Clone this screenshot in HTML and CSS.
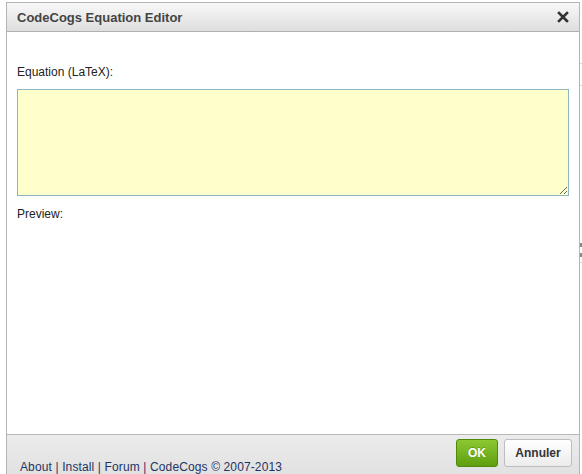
FILE: index.html
```html
<!DOCTYPE html>
<html>
<head>
<meta charset="utf-8">
<link rel="stylesheet" href="styles.css">
</head>
<body>
<div class="page-edge">
  <span class="edge-line l1"></span>
  <span class="edge-line l2"></span>
  <span class="edge-line l3"></span>
  <span class="edge-mark m1"></span>
  <span class="edge-mark m2"></span>
</div>
<div class="dialog">
  <div class="titlebar">
    <span class="title">CodeCogs Equation Editor</span>
    <span class="close">
      <svg width="12" height="12" viewBox="0 0 12 12"><path d="M2 2 L10 10 M10 2 L2 10" stroke="#333" stroke-width="2.6" stroke-linecap="square"/></svg>
    </span>
  </div>
  <div class="content">
    <label class="label">Equation (LaTeX):</label>
    <textarea class="latex"></textarea>
    <div class="label preview">Preview:</div>
  </div>
  <div class="footer">
    <div class="links">
      <a>About</a> <span class="sep">|</span> <a>Install</a> <span class="sep">|</span> <a>Forum</a> <span class="sep">|</span> <a>CodeCogs &copy; 2007-2013</a>
    </div>
    <div class="buttons">
      <button class="btn ok">OK</button>
      <button class="btn cancel">Annuler</button>
    </div>
  </div>
</div>
</body>
</html>
```
FILE: styles.css
```css
html, body {
  margin: 0;
  padding: 0;
  background: #fff;
  overflow: hidden;
  font-family: "Liberation Sans", Arial, sans-serif;
}
body {
  width: 582px;
  height: 474px;
  position: relative;
}
.page-edge {
  position: absolute;
  left: 580px;
  top: 0;
  width: 2px;
  height: 474px;
}
.edge-line {
  position: absolute;
  left: 0;
  width: 2px;
  height: 1px;
  background: #d8d8d8;
}
.l1 { top: 63px; }
.l2 { top: 85px; }
.l3 { top: 262px; }
.edge-mark {
  position: absolute;
  left: 0;
  width: 2px;
  height: 4px;
  background: #888;
}
.m1 { top: 243px; }
.m2 { top: 253px; }
.dialog {
  margin: 2px 0 0 6px;
  width: 572px;
  height: 490px;
  border: 1px solid #b4b4b4;
  display: flex;
  flex-direction: column;
  background: #fff;
}
.titlebar {
  height: 28px;
  border-bottom: 1px solid #b0b0b0;
  background: linear-gradient(#f8f8f8, #dedede);
  display: flex;
  align-items: center;
  justify-content: space-between;
  padding: 0 10px 0 10px;
}
.title {
  font-size: 13px;
  font-weight: bold;
  color: #444;
  padding-top: 1px;
}
.close {
  display: flex;
}
.content {
  flex: 1;
  padding: 33px 10px 0 10px;
  display: flex;
  flex-direction: column;
}
.label {
  font-size: 12px;
  color: #222;
  line-height: 14px;
}
.latex {
  margin-top: 10px;
  width: 552px;
  height: 107px;
  box-sizing: border-box;
  background: #ffffcc;
  border: 1px solid #8fb6bf;
  padding: 2px;
  font-family: "Liberation Mono", monospace;
  font-size: 12px;
  resize: both;
  outline: none;
}
.preview {
  margin-top: 11px;
}
.footer {
  height: 58px;
  border-top: 1px solid #b8b8b8;
  background: linear-gradient(#ececec, #dcdcdc);
  display: flex;
  justify-content: space-between;
  align-items: flex-start;
  padding: 0 7px 0 13px;
}
.links {
  font-size: 12px;
  line-height: 14px;
  margin-top: 25px;
  letter-spacing: 0.12px;
  color: #3a2a5a;
}
.links a {
  color: #1f3465;
  text-decoration: none;
}
.sep {
  color: #4a2a66;
}
.buttons {
  display: flex;
  gap: 6px;
  margin-top: 4px;
}
.btn {
  height: 28px;
  font-family: "Liberation Sans", Arial, sans-serif;
  font-size: 12px;
  font-weight: bold;
  border-radius: 3px;
  padding: 0;
  cursor: pointer;
}
.ok {
  width: 42px;
  color: #fff;
  background: linear-gradient(#8cc832, #5f9e10);
  border: 1px solid #4f8a0a;
  text-shadow: 0 -1px 0 rgba(0,0,0,0.2);
}
.cancel {
  width: 68px;
  color: #333;
  background: linear-gradient(#ffffff, #ececec);
  border: 1px solid #bdbdbd;
}
```
